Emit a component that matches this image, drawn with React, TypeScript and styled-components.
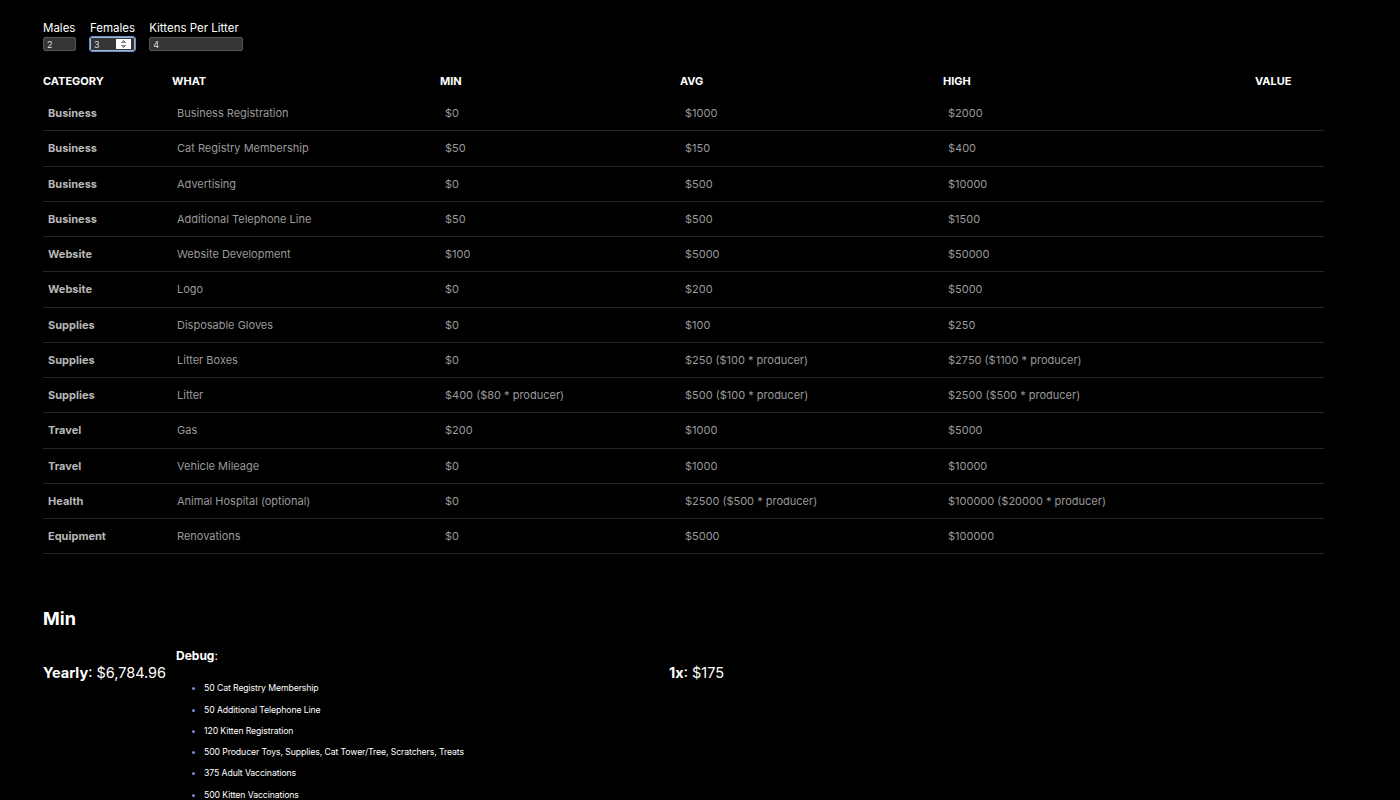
import React from "react";
import styled, { createGlobalStyle } from "styled-components";

const Global = createGlobalStyle`
  html, body { margin: 0; padding: 0; background: #000; }
  body { font-family: Inter, "Noto Sans", sans-serif; color: #fff; }
`;

const Page = styled.div`
  padding: 21px 43px 40px 43px;
  background: #000;
  min-height: 800px;
  box-sizing: border-box;
`;

const Controls = styled.div`
  display: flex;
  gap: 14px;
  align-items: flex-start;
`;

const Field = styled.label`
  display: flex;
  flex-direction: column;
  font-size: 11.5px;
  line-height: 15px;
  color: #fff;
`;

const NumInput = styled.input<{ $w: number; $focused?: boolean }>`
  width: ${(p) => p.$w}px;
  height: 14px;
  box-sizing: border-box;
  margin: 1px 0 0 0;
  padding: 0 3px;
  font-family: Inter, sans-serif;
  font-size: 9px;
  color: #ddd;
  background: #353535;
  border: 1px solid ${(p) => (p.$focused ? "#9fb9e0" : "#555")};
  border-radius: 2px;
  outline: ${(p) => (p.$focused ? "1px solid #6d8fc4" : "none")};
  appearance: textfield;
  &::-webkit-inner-spin-button { opacity: ${(p) => (p.$focused ? 1 : 0)}; }
`;

const Table = styled.table`
  margin-top: 14px;
  width: 1281px;
  border-collapse: collapse;
`;

const Th = styled.th<{ $w: number }>`
  width: ${(p) => p.$w}px;
  text-align: left;
  font-size: 11px;
  font-weight: 700;
  color: #fff;
  padding: 0;
  height: 31px;
`;

const Tr = styled.tr`
  border-bottom: 1px solid #262626;
`;

const Td = styled.td<{ $cat?: boolean }>`
  height: 34.25px;
  padding: 0 0 0 5px;
  font-size: 11px;
  font-weight: ${(p) => (p.$cat ? 700 : 400)};
  color: ${(p) => (p.$cat ? "#b8b8b8" : "#9a9a9a")};
`;

const Heading = styled.h2`
  margin: 54px 0 0 0;
  font-size: 18px;
  line-height: 22px;
  font-weight: 700;
`;

const Summary = styled.div`
  display: flex;
  align-items: flex-start;
  margin-top: 18px;
`;

const Stat = styled.div<{ $w: number }>`
  width: ${(p) => p.$w}px;
  flex: none;
  font-size: 14.5px;
  line-height: 20px;
  padding-top: 15px;
  color: #fff;
  b { font-weight: 700; }
`;

const Debug = styled.div`
  width: 493px;
  flex: none;
  font-size: 12px;
  line-height: 16px;
  b { font-weight: 700; }
`;

const List = styled.ul`
  margin: 18px 0 0 0;
  padding-left: 28px;
  li {
    font-size: 8.7px;
    line-height: 12px;
    margin-bottom: 9.3px;
    color: #fff;
    letter-spacing: -0.1px;
  }
  li::marker { color: #7a86d8; }
`;

const rows: [string, string, string, string, string][] = [
  ["Business", "Business Registration", "$0", "$1000", "$2000"],
  ["Business", "Cat Registry Membership", "$50", "$150", "$400"],
  ["Business", "Advertising", "$0", "$500", "$10000"],
  ["Business", "Additional Telephone Line", "$50", "$500", "$1500"],
  ["Website", "Website Development", "$100", "$5000", "$50000"],
  ["Website", "Logo", "$0", "$200", "$5000"],
  ["Supplies", "Disposable Gloves", "$0", "$100", "$250"],
  ["Supplies", "Litter Boxes", "$0", "$250 ($100 * producer)", "$2750 ($1100 * producer)"],
  ["Supplies", "Litter", "$400 ($80 * producer)", "$500 ($100 * producer)", "$2500 ($500 * producer)"],
  ["Travel", "Gas", "$200", "$1000", "$5000"],
  ["Travel", "Vehicle Mileage", "$0", "$1000", "$10000"],
  ["Health", "Animal Hospital (optional)", "$0", "$2500 ($500 * producer)", "$100000 ($20000 * producer)"],
  ["Equipment", "Renovations", "$0", "$5000", "$100000"],
];

const debugItems = [
  "50 Cat Registry Membership",
  "50 Additional Telephone Line",
  "120 Kitten Registration",
  "500 Producer Toys, Supplies, Cat Tower/Tree, Scratchers, Treats",
  "375 Adult Vaccinations",
  "500 Kitten Vaccinations",
];

export default function App() {
  return (
    <Page>
      <Global />
      <Controls>
        <Field>
          Males
          <NumInput type="number" defaultValue={2} $w={33} />
        </Field>
        <Field>
          Females
          <NumInput type="number" defaultValue={3} $w={45} $focused />
        </Field>
        <Field>
          Kittens Per Litter
          <NumInput type="number" defaultValue={4} $w={94} />
        </Field>
      </Controls>
      <Table>
        <thead>
          <tr>
            <Th $w={129}>CATEGORY</Th>
            <Th $w={268}>WHAT</Th>
            <Th $w={240}>MIN</Th>
            <Th $w={263}>AVG</Th>
            <Th $w={312}>HIGH</Th>
            <Th $w={69}>VALUE</Th>
          </tr>
        </thead>
        <tbody>
          {rows.map((r, i) => (
            <Tr key={i}>
              <Td $cat>{r[0]}</Td>
              <Td>{r[1]}</Td>
              <Td>{r[2]}</Td>
              <Td>{r[3]}</Td>
              <Td>{r[4]}</Td>
              <Td></Td>
            </Tr>
          ))}
        </tbody>
      </Table>
      <Heading>Min</Heading>
      <Summary>
        <Stat $w={133}>
          <b>Yearly</b>: $6,784.96
        </Stat>
        <Debug>
          <b>Debug</b>:
          <List>
            {debugItems.map((d) => (
              <li key={d}>{d}</li>
            ))}
          </List>
        </Debug>
        <Stat $w={200}>
          <b>1x</b>: $175
        </Stat>
      </Summary>
    </Page>
  );
}
